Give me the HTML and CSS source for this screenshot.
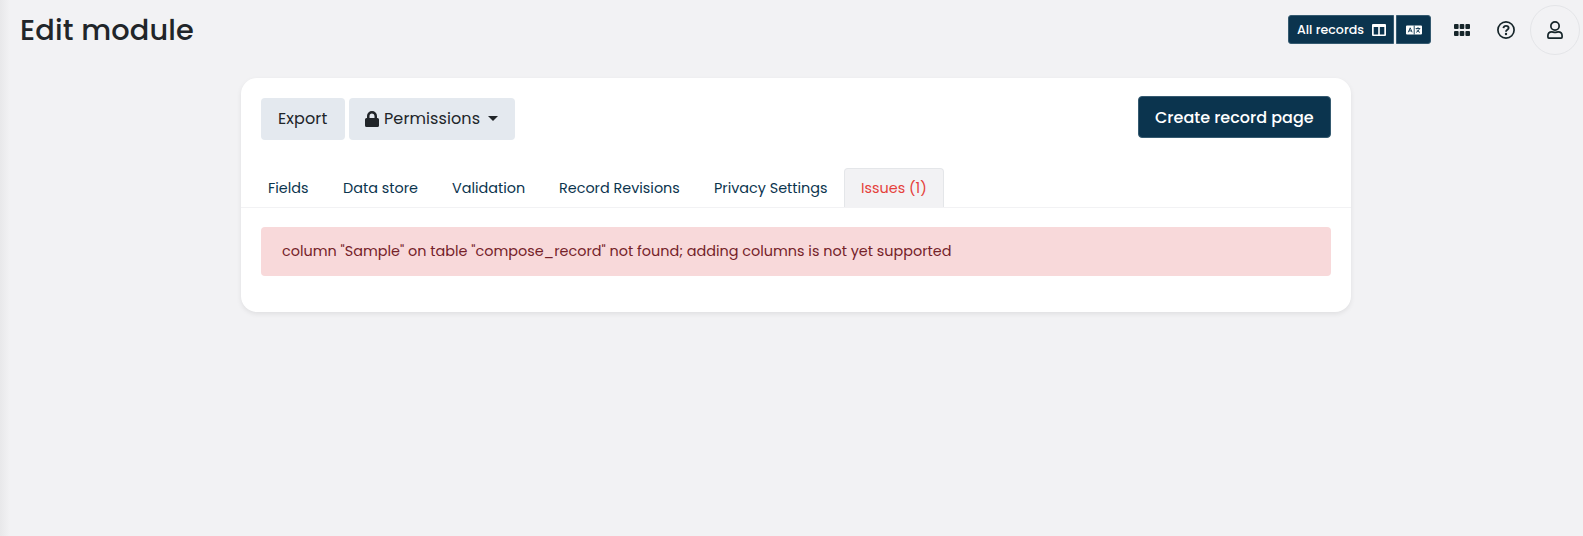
FILE: index.html
```html
<!DOCTYPE html>
<html lang="en">
<head>
<meta charset="utf-8">
<title>Edit module</title>
<link rel="stylesheet" href="styles.css">
</head>
<body>
<header class="topbar">
  <h1 class="title">Edit module</h1>
  <div class="tools">
    <div class="group">
      <button class="small-btn records">All records
        <svg class="columns" viewBox="0 0 14 12"><path fill="#fff" fill-rule="evenodd" d="M1 0h12a1 1 0 0 1 1 1v10a1 1 0 0 1-1 1H1a1 1 0 0 1-1-1V1a1 1 0 0 1 1-1zM1.700 3v7.500h4.500V3zM7.800 3v7.500h4.500V3z"/></svg>
      </button>
      <button class="small-btn language" aria-label="Translations">
        <svg class="lang" viewBox="0 0 16 10"><path fill="#fff" d="M1 .5h14a1 1 0 0 1 1 1v7a1 1 0 0 1-1 1H1a1 1 0 0 1-1-1v-7a1 1 0 0 1 1-1z"/><path fill="none" stroke="#0b344e" stroke-width=".9" d="M2.300 7.300 4.200 2.800l1.900 4.500M3 5.900h2.400M8.200.5v9M9.700 3.500h4.600M12 2.200v1.200M13.400 3.600C12.900 5.600 11.500 6.800 10.100 7.300M10.900 4.600c.5 1.300 1.600 2.300 3.100 2.800"/></svg>
      </button>
    </div>
    <svg class="grid" viewBox="0 0 16 12"><g fill="#162529"><rect width="4.600" height="5" rx="1"/><rect x="5.700" width="4.600" height="5" rx="1"/><rect x="11.400" width="4.600" height="5" rx="1"/><rect y="7" width="4.600" height="5" rx="1"/><rect x="5.700" y="7" width="4.600" height="5" rx="1"/><rect x="11.400" y="7" width="4.600" height="5" rx="1"/></g></svg>
    <svg class="help" viewBox="0 0 18 18"><g fill="none" stroke="#162529"><circle cx="9" cy="9" r="8.100" stroke-width="1.700"/><path stroke-width="1.900" d="M6.400 7.100C6.700 5.600 7.700 4.900 9 4.900c1.500 0 2.600.9 2.600 2.200C11.600 8.800 9 8.800 9 10.700"/></g><circle cx="9" cy="13" r="1.200" fill="#162529"/></svg>
    <div class="avatar"><svg class="user" viewBox="0 0 16 18"><g fill="none" stroke="#162529" stroke-width="1.700"><circle cx="8" cy="5" r="4.150"/><path d="M4.800 10.900c1.200 0 1.700.5 3.200.5s2-.5 3.200-.5c2.300 0 3.900 1.700 3.900 3.900v1.300c0 .6-.4 1-1 1H1.900c-.6 0-1-.4-1-1v-1.300c0-2.200 1.600-3.900 3.900-3.900z"/></g></svg></div>
  </div>
</header>
<main class="card">
  <div class="actions">
    <button class="btn light export">Export</button>
    <button class="btn light perms">
      <svg class="lock" viewBox="0 0 14 16"><path fill="#212529" fill-rule="evenodd" d="M2 7V5a5 5 0 0 1 10 0v2h.5A1.500 1.500 0 0 1 14 8.500v6a1.500 1.500 0 0 1-1.500 1.500h-11A1.500 1.500 0 0 1 0 14.500v-6A1.500 1.500 0 0 1 1.500 7zM4.500 7h5V5a2.500 2.500 0 0 0-5 0z"/></svg>
      Permissions<i class="caret"></i>
    </button>
    <button class="btn primary">Create record page</button>
  </div>
  <nav class="tabs">
    <a class="tab fields">Fields</a>
    <a class="tab store">Data store</a>
    <a class="tab validation">Validation</a>
    <a class="tab revisions">Record Revisions</a>
    <a class="tab privacy">Privacy Settings</a>
    <a class="tab issues">Issues (1)</a>
  </nav>
  <div class="alert">column "Sample" on table "compose_record" not found; adding columns is not yet supported</div>
</main>
</body>
</html>
```
FILE: styles.css
```css
* { box-sizing: border-box; }
body {
  margin: 0;
  height: 536px;
  overflow: hidden;
  background: linear-gradient(90deg, #e8e8ea 0, #f2f2f4 10px) #f2f2f4;
  color: #212529;
  font: 400 14.400px/22px Poppins, Inter, sans-serif;
  white-space: nowrap;
}
button { margin: 0; border: 0; font: inherit; color: inherit; }
svg { display: block; flex: none; }
.topbar { display: flex; justify-content: space-between; height: 60px; padding: 0 3px 0 20px; }
.title { margin: 0; font-size: 28.800px; line-height: 60px; font-weight: 500; letter-spacing: .15px; }
.tools { display: flex; align-items: center; }
.group { display: flex; gap: 2px; margin: 0 23px 1px 0; }
.small-btn { display: flex; align-items: center; height: 29px; padding: 0; background: #0b344e; border: 1px solid #355a70; color: #fff; font-size: 12.600px; font-weight: 500; }
.records { width: 106px; padding: 0 7px 0 8px; justify-content: space-between; border-radius: 3px 0 0 3px; }
.language { width: 35px; justify-content: center; border-radius: 0 3px 3px 0; }
.columns { width: 14px; height: 12px; }
.lang { width: 16px; height: 10px; }
.grid { width: 16px; height: 12px; margin-right: 27px; }
.help { width: 18px; height: 18px; margin-right: 15px; }
.avatar { display: flex; align-items: center; justify-content: center; width: 50px; height: 50px; border: 1px solid #e4e5e8; border-radius: 50%; }
.user { width: 16px; height: 18px; }
.card { width: 1110px; height: 234px; margin: 18px 0 0 241px; background: #fff; border-radius: 16px; box-shadow: 0 2px 5px rgba(0,0,0,.08); }
.actions { display: flex; gap: 4px; height: 90px; padding: 20px 20px 0; }
.btn { display: flex; align-items: center; height: 42px; padding: 0 17px; border-radius: 4px; font-size: 16px; letter-spacing: .1px; }
.light { background: #e4e9ef; }
.export { width: 84px; }
.perms { width: 166px; padding: 0 16px; }
.lock { width: 14px; height: 16px; margin-right: 5px; }
.caret { margin: 0 0 2px 8px; border: 5px solid transparent; border-top-color: #212529; border-bottom: 0; }
.primary { width: 193px; margin: -2px 0 0 auto; padding-top: 1px; background: #0b344e; border: 1px solid #355a70; padding-left: 16px; color: #fff; font-weight: 500; letter-spacing: 0; }
.tabs { display: flex; height: 40px; padding-left: 10px; border-bottom: 1px solid #f2f2f4; color: #0b344e; }
.tab { padding: 9px 0 0 17px; }
.fields { width: 75px; }
.store { width: 109px; }
.validation { width: 107px; }
.revisions { width: 155px; }
.privacy { width: 147px; }
.issues { width: 100px; padding: 8px 0 0 16px; background: #f2f2f4; border: 1px solid #e4e6e9; border-bottom: 0; border-radius: 4px 4px 0 0; color: #e5413b; }
.alert { height: 49px; margin: 19px 20px 0; padding: 13px 21px; background: #f8d9da; border-radius: 4px; color: #752229; }
```
